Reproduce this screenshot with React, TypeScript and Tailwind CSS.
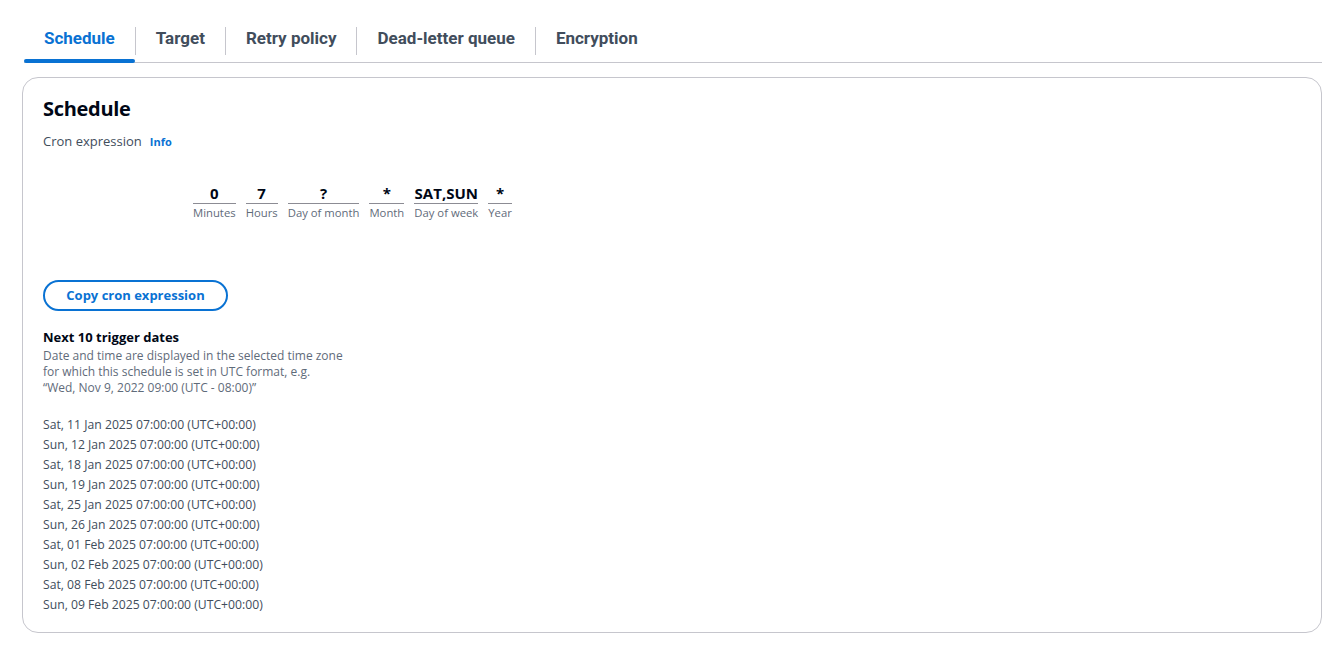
import React from 'react';

const tabs = ['Schedule', 'Target', 'Retry policy', 'Dead-letter queue', 'Encryption'];

const fields = [
  { value: '0', label: 'Minutes' },
  { value: '7', label: 'Hours' },
  { value: '?', label: 'Day of month' },
  { value: '*', label: 'Month' },
  { value: 'SAT,SUN', label: 'Day of week' },
  { value: '*', label: 'Year' },
];

const dates = [
  'Sat, 11 Jan 2025 07:00:00 (UTC+00:00)',
  'Sun, 12 Jan 2025 07:00:00 (UTC+00:00)',
  'Sat, 18 Jan 2025 07:00:00 (UTC+00:00)',
  'Sun, 19 Jan 2025 07:00:00 (UTC+00:00)',
  'Sat, 25 Jan 2025 07:00:00 (UTC+00:00)',
  'Sun, 26 Jan 2025 07:00:00 (UTC+00:00)',
  'Sat, 01 Feb 2025 07:00:00 (UTC+00:00)',
  'Sun, 02 Feb 2025 07:00:00 (UTC+00:00)',
  'Sat, 08 Feb 2025 07:00:00 (UTC+00:00)',
  'Sun, 09 Feb 2025 07:00:00 (UTC+00:00)',
];

export default function App() {
  return (
    <div className="min-h-screen bg-white pl-[22px] pr-[8px] pt-[20px] font-['Open_Sans',sans-serif] text-[#000716]">
      {/* Tabs */}
      <div className="ml-[2px] flex items-stretch border-b border-[#c6c6cd]">
        {tabs.map((t, i) => (
          <div key={t} className="flex items-center">
            {i > 0 && <div className="h-[28px] w-px bg-[#c6c6cd]" />}
            <div
              className={
                "relative px-[20px] pb-[10px] pt-[6px] font-['Roboto',sans-serif] text-[17px] font-bold " +
                (i === 0 ? 'text-[#0972d3]' : 'text-[#414d5c]')
              }
            >
              {t}
              {i === 0 && (
                <div className="absolute bottom-[-1px] left-0 right-0 h-[4px] rounded-full bg-[#0972d3]" />
              )}
            </div>
          </div>
        ))}
      </div>

      {/* Card */}
      <div className="mt-[14px] rounded-[16px] border border-[#c6c6cd] px-[20px] pb-[17px] pt-[16px]">
        <h2 className="text-[20px] font-bold leading-[30px] tracking-[-0.3px]">Schedule</h2>
        <div className="mt-[8px] flex items-baseline gap-[8px]">
          <span className="text-[13px] text-[#414d5c]">Cron expression</span>
          <span className="text-[11px] font-bold text-[#0972d3]">Info</span>
        </div>

        <div className="ml-[150px] mt-[32px] flex gap-[10px]">
          {fields.map((f) => (
            <div key={f.label} className="flex flex-col items-center">
              <div className="w-full border-b border-[#8c8c94] text-center text-[15px] font-bold leading-[20px]">
                {f.value}
              </div>
              <div className="mt-[1px] whitespace-nowrap text-[11.3px] leading-[16px] text-[#5f6b7a]">{f.label}</div>
            </div>
          ))}
        </div>

        <button className="mt-[59px] h-[31px] w-[185px] rounded-full border-2 border-[#0972d3] text-[13px] font-bold text-[#0972d3]">
          Copy cron expression
        </button>

        <div className="mt-[16px] text-[13px] font-bold leading-[20px]">Next 10 trigger dates</div>
        <div className="mt-[1px] w-[300px] text-[12px] leading-[16px] text-[#5f6b7a]">
          Date and time are displayed in the selected time zone for which this schedule is set in UTC format, e.g.
          “Wed, Nov 9, 2022 09:00 (UTC - 08:00)”
        </div>

        <div className="mt-[19px] flex flex-col">
          {dates.map((d) => (
            <div key={d} className="text-[12.2px] leading-[20px] text-[#414d5c]">
              {d}
            </div>
          ))}
        </div>
      </div>
    </div>
  );
}
